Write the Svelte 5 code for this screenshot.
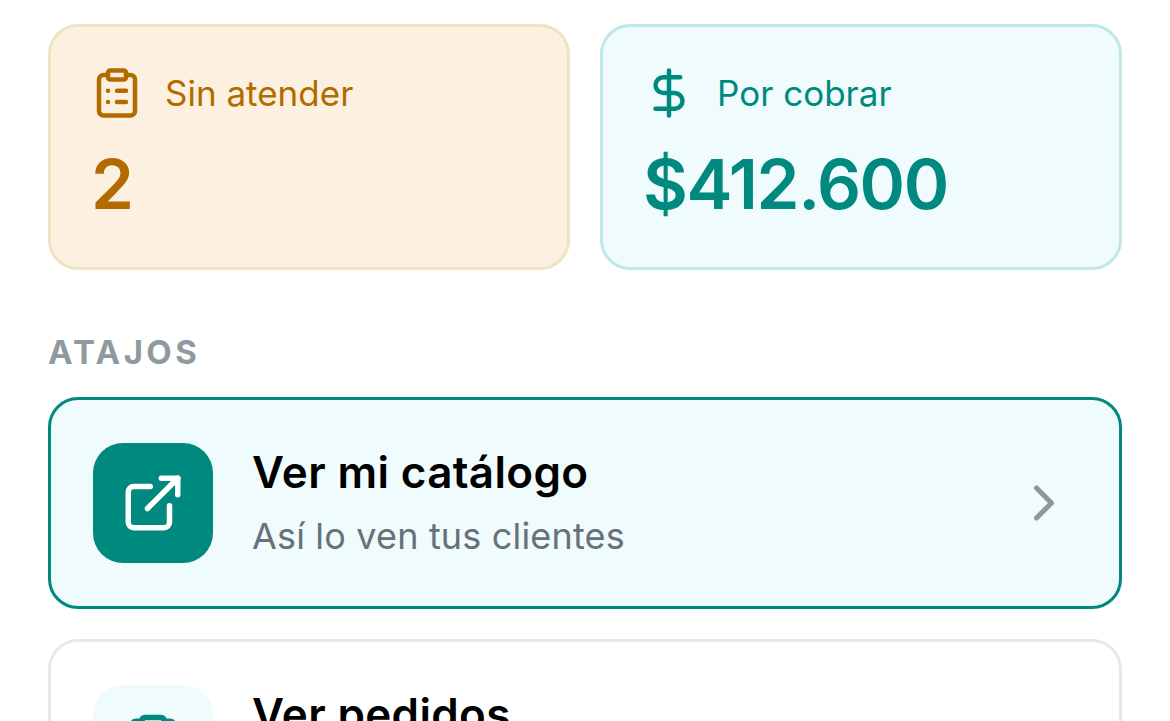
<script>
  const shortcuts = [
    { title: 'Ver mi catálogo', sub: 'Así lo ven tus clientes', primary: true },
    { title: 'Ver pedidos', sub: 'Revisa lo que te han pedido', primary: false }
  ];
</script>

<div class="page">
  <div class="stats">
    <div class="stat amber">
      <div class="stat-head">
        <svg class="stat-icon" viewBox="0 0 24 24" fill="none" stroke="currentColor" stroke-width="2" stroke-linecap="round" stroke-linejoin="round">
          <rect x="8" y="2" width="8" height="4" rx="1" />
          <path d="M16 4h2a2 2 0 0 1 2 2v14a2 2 0 0 1-2 2H6a2 2 0 0 1-2-2V6a2 2 0 0 1 2-2h2" />
          <path d="M12 11h4" />
          <path d="M12 16h4" />
          <path d="M8 11h.01" />
          <path d="M8 16h.01" />
        </svg>
        <span>Sin atender</span>
      </div>
      <div class="stat-value">2</div>
    </div>
    <div class="stat teal">
      <div class="stat-head">
        <svg class="stat-icon" viewBox="0 0 24 24" fill="none" stroke="currentColor" stroke-width="2" stroke-linecap="round" stroke-linejoin="round">
          <path d="M12 2v20" />
          <path d="M17 5H9.5a3.5 3.5 0 0 0 0 7h5a3.5 3.5 0 0 1 0 7H6" />
        </svg>
        <span>Por cobrar</span>
      </div>
      <div class="stat-value">$412.600</div>
    </div>
  </div>

  <h2>ATAJOS</h2>

  <div class="shortcuts">
    {#each shortcuts as s}
      <div class="shortcut" class:primary={s.primary}>
        <div class="shortcut-icon">
          {#if s.primary}
            <svg viewBox="0 0 24 24" fill="none" stroke="currentColor" stroke-width="2" stroke-linecap="round" stroke-linejoin="round">
              <path d="M15 3h6v6" />
              <path d="M10 14 21 3" />
              <path d="M18 13v6a2 2 0 0 1-2 2H5a2 2 0 0 1-2-2V8a2 2 0 0 1 2-2h6" />
            </svg>
          {:else}
            <svg viewBox="0 0 24 24" fill="none" stroke="currentColor" stroke-width="2" stroke-linecap="round" stroke-linejoin="round">
              <rect x="8" y="2" width="8" height="4" rx="1" />
              <path d="M16 3.4h2a2 2 0 0 1 2 2V20a2 2 0 0 1-2 2H6a2 2 0 0 1-2-2V5.4a2 2 0 0 1 2-2h2" />
            </svg>
          {/if}
        </div>
        <div class="shortcut-text">
          <div class="shortcut-title">{s.title}</div>
          <div class="shortcut-sub">{s.sub}</div>
        </div>
        <svg class="chevron" viewBox="0 0 24 24" fill="none" stroke="currentColor" stroke-width="2" stroke-linecap="round" stroke-linejoin="round">
          <path d="m9 18 6-6-6-6" />
        </svg>
      </div>
    {/each}
  </div>
</div>

<style>
  :global(body) {
    margin: 0;
    background: #fff;
    overflow: hidden;
  }

  .page {
    height: 721px;
    overflow: hidden;
    box-sizing: border-box;
    padding: 24px 48px 0;
    font-family: "Inter", "Liberation Sans", sans-serif;
  }

  .stats {
    display: grid;
    grid-template-columns: 1fr 1fr;
    gap: 30px;
  }

  .stat {
    box-sizing: border-box;
    height: 246px;
    padding: 41px 40px 0;
    border: 3px solid;
    border-radius: 30px;
  }

  .amber {
    background: #fcf1e0;
    border-color: #f0e3c4;
    color: #b36b00;
  }

  .teal {
    background: #effbfc;
    border-color: #bfe8e6;
    color: #00897f;
  }

  .stat-head {
    display: flex;
    align-items: center;
    gap: 21px;
    height: 50px;
    font-size: 35px;
  }

  .stat-icon {
    width: 54px;
    height: 54px;
    flex: none;
    margin-left: -1px;
  }

  .stat-value {
    margin-top: 24px;
    font-size: 69px;
    line-height: 84px;
    font-weight: 600;
    letter-spacing: -1.4px;
  }

  h2 {
    margin: 64px 0 27px;
    font-size: 33px;
    line-height: 36px;
    font-weight: 700;
    letter-spacing: 3.4px;
    color: #8f9aa0;
  }

  .shortcuts {
    display: flex;
    flex-direction: column;
    gap: 30px;
  }

  .shortcut {
    box-sizing: border-box;
    display: flex;
    align-items: center;
    gap: 39px;
    height: 212px;
    padding: 0 60px 0 42px;
    background: #fff;
    border: 3px solid #e8e8e8;
    border-radius: 30px;
    flex: none;
  }

  .shortcut.primary {
    background: #effbfc;
    border-color: #00897f;
  }

  .shortcut-icon {
    display: flex;
    align-items: center;
    justify-content: center;
    width: 120px;
    height: 120px;
    flex: none;
    border-radius: 30px;
    background: #effbfc;
    color: #00897f;
  }

  .primary .shortcut-icon {
    background: #00897f;
    color: #fff;
  }

  .shortcut-icon svg {
    width: 66px;
    height: 66px;
  }

  .shortcut-text {
    flex: 1;
    min-width: 0;
    padding-bottom: 2px;
  }

  .shortcut-title {
    font-size: 44px;
    line-height: 56px;
    font-weight: 600;
    letter-spacing: 0.35px;
    color: #000;
  }

  .shortcut-sub {
    margin-top: 12px;
    font-size: 36px;
    line-height: 48px;
    letter-spacing: 0.17px;
    color: #667178;
  }

  .chevron {
    width: 60px;
    height: 60px;
    flex: none;
    margin-right: -15px;
    color: #8f9598;
  }
</style>
